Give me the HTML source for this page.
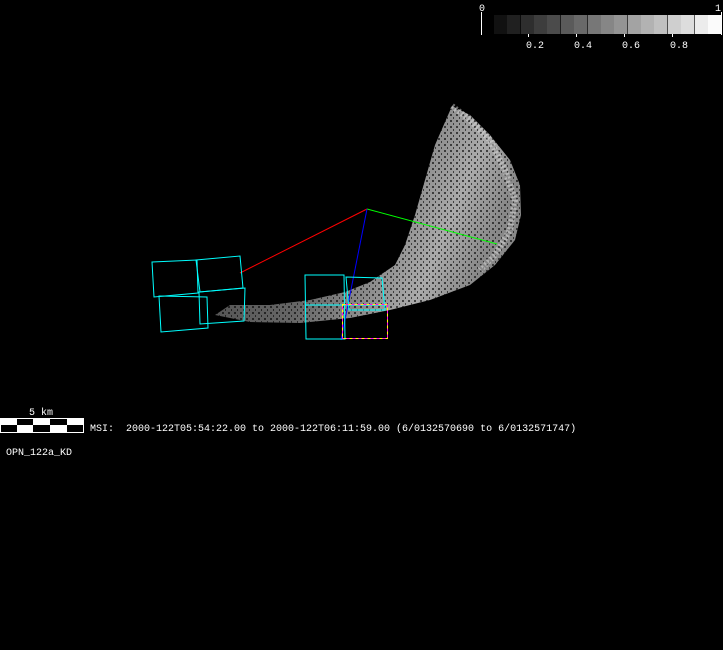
<!DOCTYPE html>
<html><head><meta charset="utf-8"><style>
html,body{margin:0;padding:0;background:#000;width:723px;height:650px;overflow:hidden}
svg{display:block}
text{font-family:"Liberation Mono","DejaVu Sans Mono",monospace;font-size:10px;fill:#fff}
</style></head><body>
<svg width="723" height="650" viewBox="0 0 723 650" xmlns="http://www.w3.org/2000/svg">
<defs>
<linearGradient id="ast" x1="0" y1="0" x2="1" y2="0.3">
<stop offset="0" stop-color="#444"/><stop offset="0.5" stop-color="#666"/><stop offset="0.85" stop-color="#aaa"/><stop offset="1" stop-color="#888"/>
</linearGradient>
<pattern id="tex" width="6" height="6" patternUnits="userSpaceOnUse">
<rect x="0" y="0" width="2" height="2" fill="#000"/>
<rect x="3" y="3" width="1" height="2" fill="#000"/>
</pattern>
</defs>
<!-- colorbar -->
<g>
<rect x="494" y="15" width="13.4" height="19" fill="#111"/>
<rect x="507" y="15" width="13.4" height="19" fill="#202020"/>
<rect x="521" y="15" width="13.4" height="19" fill="#2e2e2e"/>
<rect x="534" y="15" width="13.4" height="19" fill="#3d3d3d"/>
<rect x="547" y="15" width="13.4" height="19" fill="#4b4b4b"/>
<rect x="561" y="15" width="13.4" height="19" fill="#5a5a5a"/>
<rect x="574" y="15" width="13.4" height="19" fill="#696969"/>
<rect x="588" y="15" width="13.4" height="19" fill="#777"/>
<rect x="601" y="15" width="13.4" height="19" fill="#868686"/>
<rect x="614" y="15" width="13.4" height="19" fill="#949494"/>
<rect x="628" y="15" width="13.4" height="19" fill="#a3a3a3"/>
<rect x="641" y="15" width="13.4" height="19" fill="#b2b2b2"/>
<rect x="654" y="15" width="13.4" height="19" fill="#c0c0c0"/>
<rect x="668" y="15" width="13.4" height="19" fill="#cfcfcf"/>
<rect x="681" y="15" width="13.4" height="19" fill="#dddddd"/>
<rect x="695" y="15" width="13.4" height="19" fill="#ececec"/>
<rect x="708" y="15" width="13" height="19" fill="#fbfbfb"/>
<line x1="481.5" y1="12" x2="481.5" y2="35" stroke="#fff"/>
<line x1="721.5" y1="12" x2="721.5" y2="35" stroke="#fff"/>
<line x1="528.5" y1="34" x2="528.5" y2="37" stroke="#fff"/>
<line x1="576.5" y1="34" x2="576.5" y2="37" stroke="#fff"/>
<line x1="624.5" y1="34" x2="624.5" y2="37" stroke="#fff"/>
<line x1="672.5" y1="34" x2="672.5" y2="37" stroke="#fff"/>
<text x="479" y="11">0</text><text x="715" y="11">1</text>
<text x="526" y="48">0.2</text><text x="574" y="48">0.4</text><text x="622" y="48">0.6</text><text x="670" y="48">0.8</text>
</g>
<!-- asteroid -->
<path id="a" d="M452,106 L470,115 L490,135 L510,160 L520,185 L521,215 L515,240 L495,265 L470,285 L430,300 L390,310 L350,318 L300,323 L250,322 L215,315 L230,305 L270,305 L310,300 L345,292 L370,282 L395,265 L405,245 L415,215 L425,180 L435,145 Z" fill="url(#ast)"/>
<path d="M452,106 L470,115 L490,135 L510,160 L520,185 L521,215 L515,240 L495,265 L470,285 L430,300 L390,310 L350,318 L300,323 L250,322 L215,315 L230,305 L270,305 L310,300 L345,292 L370,282 L395,265 L405,245 L415,215 L425,180 L435,145 Z" fill="url(#tex)" opacity="0.6"/>
<path d="M452,106 L470,120 L490,140 L505,170 L515,200 L510,230 L495,255 L480,270" fill="none" stroke="#ddd" stroke-width="6" opacity="0.5" stroke-dasharray="2 2"/>
<!-- lines -->
<line x1="240" y1="273" x2="367" y2="209" stroke="#f00"/>
<line x1="367" y1="209" x2="497" y2="244" stroke="#0f0"/>
<line x1="367" y1="209" x2="341" y2="340" stroke="#00f"/>
<!-- cyan boxes -->
<g fill="none" stroke="#0ff" stroke-width="1">
<path d="M152,262 L197,260 L198,293 L154,297 Z"/>
<path d="M159,296 L207,297 L208,328 L161,332 Z"/>
<path d="M196,260 L240,256 L243,288 L200,292 Z"/>
<path d="M199,292 L245,288 L244,321 L200,324 Z"/>
<path d="M305,275 L344,275 L345,339 L306,339 Z"/>
<path d="M346,277 L382,278 L385,310 L349,310 Z"/>
<path d="M306,305 L386,305"/>
</g>
<rect x="342.5" y="304.5" width="45" height="34" fill="none" stroke="#ff0" stroke-dasharray="3 3"/>
<rect x="342.5" y="304.5" width="45" height="34" fill="none" stroke="#f0f" stroke-dasharray="3 3" stroke-dashoffset="3"/>
<!-- scale bar -->
<rect x="0.5" y="418.5" width="83" height="14" fill="#000" stroke="#fff"/>
<rect x="0" y="418" width="17" height="7" fill="#fff"/>
<rect x="33" y="418" width="17" height="7" fill="#fff"/>
<rect x="67" y="418" width="17" height="7" fill="#fff"/>
<rect x="17" y="425" width="16" height="7" fill="#fff"/>
<rect x="50" y="425" width="17" height="7" fill="#fff"/>
<text x="29" y="415">5 km</text>
<text x="90" y="431" xml:space="preserve">MSI:  2000-122T05:54:22.00 to 2000-122T06:11:59.00 (6/0132570690 to 6/0132571747)</text>
<text x="6" y="455">OPN_122a_KD</text>
</svg>
</body></html>
